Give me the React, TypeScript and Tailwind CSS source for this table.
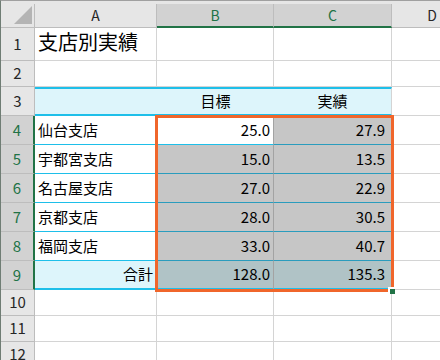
import React from "react";

const jp = "font-['Noto_Sans_CJK_JP',sans-serif]";

const rows = [
  { n: 4, name: "仙台支店", plan: "25.0", actual: "27.9" },
  { n: 5, name: "宇都宮支店", plan: "15.0", actual: "13.5" },
  { n: 6, name: "名古屋支店", plan: "27.0", actual: "22.9" },
  { n: 7, name: "京都支店", plan: "28.0", actual: "30.5" },
  { n: 8, name: "福岡支店", plan: "33.0", actual: "40.7" },
];

const RowHead = ({ n, active }: { n: number; active?: boolean }) =>
  active ? (
    <div className="flex items-center justify-center bg-[#d2d2d2] text-[#217346] text-[15px] border-r-2 border-r-[#217346] border-b border-b-[#bdbdbd]">
      {n}
    </div>
  ) : (
    <div className="flex items-center justify-center bg-[#e6e6e6] text-[#262626] text-[15px] border-r border-r-[#bdbdbd] border-b border-b-[#bdbdbd]">
      {n}
    </div>
  );

const Blank = () => (
  <div className="border-r border-r-[#d4d4d4] border-b border-b-[#d4d4d4]" />
);

const App = () => {
  return (
    <div className={`w-[440px] h-[360px] overflow-hidden bg-white border-l border-l-[#6f7d74] border-t border-t-[#a0a0a0] ${jp}`}>
      <div className="h-[3px] bg-[#e6e6e6]" />
      <div className="relative grid grid-cols-[34px_122px_117px_118px_80px] grid-rows-[24px_33px_26px_29px_29px_29px_29px_29px_29px_29px_26px_26px_26px]">
        {/* column headers */}
        <div className="relative bg-[#e6e6e6] border-r border-r-[#bdbdbd] border-b border-b-[#bdbdbd]">
          <svg className="absolute right-[2px] bottom-[3px]" width="18" height="18" viewBox="0 0 18 18">
            <polygon points="18,0 18,18 0,18" fill="#b4b4b4" />
          </svg>
        </div>
        <div className="flex items-center justify-center bg-[#e6e6e6] text-[#262626] text-[14px] border-r border-r-[#bdbdbd] border-b border-b-[#bdbdbd]">
          A
        </div>
        <div className="flex items-center justify-center bg-[#d2d2d2] text-[#217346] text-[14px] border-r border-r-[#bdbdbd] border-b-2 border-b-[#217346]">
          B
        </div>
        <div className="flex items-center justify-center bg-[#d2d2d2] text-[#217346] text-[14px] border-r border-r-[#bdbdbd] border-b-2 border-b-[#217346]">
          C
        </div>
        <div className="flex items-center justify-center bg-[#e6e6e6] text-[#262626] text-[14px] border-b border-b-[#bdbdbd]">
          D
        </div>

        {/* row 1 */}
        <RowHead n={1} />
        <div className="flex items-center pl-[3px] pb-1 text-[20px] text-black border-r border-r-[#d4d4d4] border-b border-b-[#d4d4d4] whitespace-nowrap">
          支店別実績
        </div>
        <Blank />
        <Blank />
        <Blank />

        {/* row 2 */}
        <RowHead n={2} />
        <Blank />
        <Blank />
        <Blank />
        <Blank />

        {/* row 3 */}
        <RowHead n={3} />
        <div className="bg-[#ddf5fb] border-t-2 border-t-[#1ebfe9] border-b-2 border-b-[#1ebfe9]" />
        <div className="flex items-center justify-center text-[15px] text-black bg-[#ddf5fb] border-t-2 border-t-[#1ebfe9] border-b-2 border-b-[#1ebfe9]">
          目標
        </div>
        <div className="flex items-center justify-center text-[15px] text-black bg-[#ddf5fb] border-r border-r-[#d4d4d4] border-t-2 border-t-[#1ebfe9] border-b-2 border-b-[#1ebfe9]">
          実績
        </div>
        <Blank />

        {/* rows 4-8 */}
        {rows.map((r, i) => (
          <React.Fragment key={r.n}>
            <RowHead n={r.n} active />
            <div className="flex items-center pl-[3px] text-[15px] text-black bg-white border-b border-b-[#1ebfe9] whitespace-nowrap">
              {r.name}
            </div>
            <div
              className={
                i === 0
                  ? "flex items-center justify-end pr-[3px] text-[15px] text-black bg-white border-r border-r-[#a3a3a3] border-b border-b-[#1ebfe9]"
                  : "flex items-center justify-end pr-[3px] text-[15px] text-black bg-[#c6c6c6] border-r border-r-[#a3a3a3] border-b border-b-[#2a9cbd]"
              }
            >
              {r.plan}
            </div>
            <div className="flex items-center justify-end pr-[6px] text-[15px] text-black bg-[#c6c6c6] border-r border-r-[#d4d4d4] border-b border-b-[#2a9cbd]">
              {r.actual}
            </div>
            <Blank />
          </React.Fragment>
        ))}

        {/* row 9 total */}
        <RowHead n={9} active />
        <div className="flex items-center justify-end pr-[4px] text-[15px] text-black bg-[#ddf5fb] border-b-2 border-b-[#1ebfe9]">
          合計
        </div>
        <div className="flex items-center justify-end pr-[3px] text-[15px] text-black bg-[#b0c3c6] border-r border-r-[#a3a3a3] border-b-2 border-b-[#1ebfe9]">
          128.0
        </div>
        <div className="flex items-center justify-end pr-[6px] text-[15px] text-black bg-[#b0c3c6] border-r border-r-[#d4d4d4] border-b-2 border-b-[#1ebfe9]">
          135.3
        </div>
        <Blank />

        {/* rows 10-12 */}
        {[10, 11, 12].map((n) => (
          <React.Fragment key={n}>
            <RowHead n={n} />
            <Blank />
            <Blank />
            <Blank />
            <Blank />
          </React.Fragment>
        ))}

        {/* selection border */}
        <div className="absolute left-[154px] top-[111px] w-[239px] h-[177px] border-[3px] border-[#f0662b] pointer-events-none" />
        <div className="absolute left-[387px] top-[283px] w-[7px] h-[7px] bg-[#217346] border-l-2 border-t-2 border-l-white border-t-white" />
      </div>
    </div>
  );
};

export default App;
